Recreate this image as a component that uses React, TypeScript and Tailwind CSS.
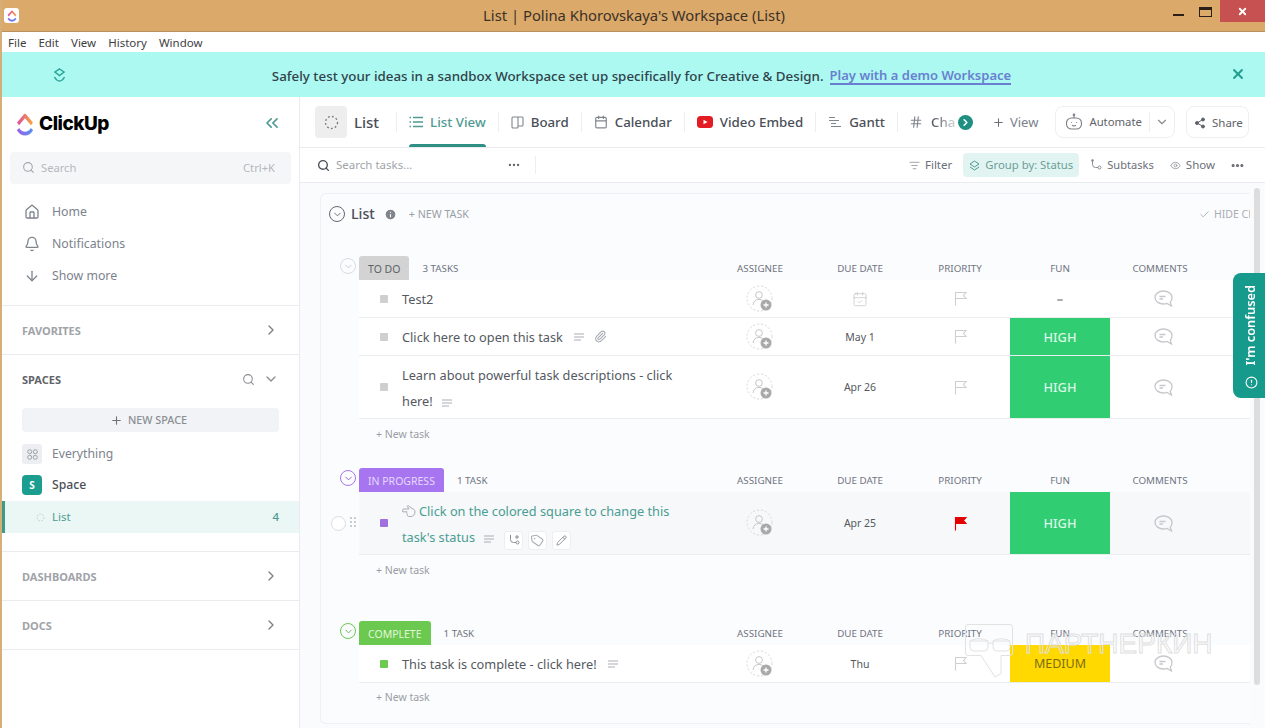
import type { ReactNode } from "react";
import {
  ArrowDown,
  Bell,
  CalendarCheck,
  Calendar,
  Check,
  ChevronDown,
  ChevronRight,
  ChevronsLeft,
  Hash,
  House,
  Info,
  ListFilter,
  Minus,
  Paperclip,
  Pencil,
  Plus,
  Search,
  Share2,
  Tag,
  X,
  AlertCircle,
  Ellipsis,
  Eye,
} from "lucide-react";

function Logo({ width, height, id }: { width: number; height: number; id: string }) {
  return (
    <svg width={width} height={height} viewBox="1 1 22 22" preserveAspectRatio="none" fill="none">
      <defs>
        <linearGradient id={`${id}-top`} x1="0" y1="0" x2="1" y2="0">
          <stop offset="0" stopColor="#e0509f" />
          <stop offset="1" stopColor="#f7a13e" />
        </linearGradient>
        <linearGradient id={`${id}-bottom`} x1="0" y1="0" x2="1" y2="0">
          <stop offset="0" stopColor="#9a62e6" />
          <stop offset="1" stopColor="#5a8fee" />
        </linearGradient>
      </defs>
      <path d="M3.5 11.5L12 3.500l8.500 8" stroke={`url(#${id}-top)`} strokeWidth="3.6" strokeLinejoin="round" />
      <path d="M3.5 16.500c2.200 2.800 5 4.300 8.500 4.300s6.300-1.500 8.500-4.300" stroke={`url(#${id}-bottom)`} strokeWidth="3.6" />
    </svg>
  );
}

function Lines({ className = "text-[#a9adb3]" }: { className?: string }) {
  return (
    <svg width="12" height="8" viewBox="0 0 12 8" className={`${className} inline-block`} fill="none" stroke="currentColor">
      <path d="M1 1h10M1 4h10M1 7h7" />
    </svg>
  );
}

function Assignee() {
  return (
    <svg width="28" height="28" viewBox="0 0 28 28" fill="none">
      <circle cx="13.5" cy="13.5" r="12.5" stroke="#d8d8d8" strokeDasharray="2 2" />
      <circle cx="13" cy="10" r="3.4" stroke="#c8c8c8" />
      <path d="M7 20c.4-3.600 2.800-5.600 6-5.600 1.500 0 2.700.4 3.700 1.200" stroke="#c8c8c8" />
      <circle cx="20" cy="20" r="5.500" fill="#a9a9a9" />
      <path d="M20 17.500v5M17.500 20h5" stroke="#fff" strokeWidth="1.300" />
    </svg>
  );
}

function Comment() {
  return (
    <svg width="19" height="17" viewBox="0 0 19 17" fill="none" stroke="#c6c8cb" strokeWidth="1.300" className="ml-[6px]">
      <path d="M9.500 1C4.800 1 1 3.800 1 7.500S4.800 14 9.500 14c1.300 0 2.400-.2 3.500-.6l4.500 2.600-1.200-3.700c1.100-1.200 1.700-2.800 1.700-4.800C18 3.800 14.200 1 9.500 1z" />
      <path d="M5.500 6.500h6M5.500 9h3.500" />
    </svg>
  );
}

function FlagIcon({ red = false }: { red?: boolean }) {
  return (
    <svg width="13" height="15" viewBox="0 0 13 15" fill={red ? "#e50000" : "none"} stroke={red ? "#e50000" : "#cfcfcf"} strokeWidth="1.100">
      <path d="M1.500 14.500V1.500h10.500l-2.500 3 2.500 3H1.500" />
    </svg>
  );
}

function HandLeft() {
  return (
    <svg width="14" height="13" viewBox="0 0 14 13" fill="none" stroke="#a9adb3" className="mr-[3px] inline-block -translate-y-[1px]">
      <path d="M1 4h6l-1.500-2.200c-.5-.8.4-1.500 1-.9L10 3.500c1.800.3 3 1.500 3 3.500 0 2.500-1.800 4.500-4 4.500H6.500c-.9 0-1.300-.9-.8-1.500-.8-.2-1-1.100-.5-1.600-.7-.3-.8-1.200-.2-1.600H1c-1.100 0-1.100-1.800 0-1.800z" />
    </svg>
  );
}

function Divider() {
  return <div className="h-[20px] w-px shrink-0 bg-[#eeeeee]" />;
}

function ViewTab({ icon, label, active = false }: { icon: ReactNode; label: string; active?: boolean }) {
  return (
    <div className="relative flex h-[50px] shrink-0 items-center px-[12px]">
      <div className={`flex items-center gap-[7px] text-[13.300px] font-medium ${active ? "text-[#4f9a92]" : "text-[#4a4f57]"}`}>
        {icon}
        <span className="pt-[2px]">{label}</span>
      </div>
      {active && <div className="absolute bottom-0 left-[12px] right-[12px] h-[3px] rounded-t bg-[#2f8f84]" />}
    </div>
  );
}

function SideSection({ label, dark = false, children }: { label: string; dark?: boolean; children?: ReactNode }) {
  return (
    <div className="flex h-[48px] items-center justify-between pl-[20px] pr-[20px]">
      <span className={`pt-[2px] text-[11px] font-bold ${dark ? "text-[#5f6369]" : "text-[#a0a3a8]"}`}>{label}</span>
      {children ?? <ChevronRight size={16} className="text-[#7c7f85]" />}
    </div>
  );
}

function NavItem({ icon, label }: { icon: ReactNode; label: string }) {
  return (
    <div className="flex h-[32px] items-center gap-[12px] pl-[21px] text-[12.300px] text-[#7c828d]">
      <span className="flex w-[17px] justify-center text-[#80858d]">{icon}</span>
      {label}
    </div>
  );
}

function Sidebar() {
  return (
    <aside className="flex w-[298px] shrink-0 flex-col border-r border-[#e9ebee] bg-white">
      <div className="flex h-[55px] items-start justify-between pl-[14px] pr-[17px] pt-[13px]">
        <div className="flex items-center gap-[5px]">
          <Logo width={18} height={23} id="side" />
          <span className="font-['Inter',sans-serif] text-[19px] font-extrabold tracking-[-0.5px] text-black">ClickUp</span>
        </div>
        <ChevronsLeft size={20} className="mt-[3px] text-[#4f9a92]" />
      </div>
      <div className="mx-[8px] flex h-[32px] items-center justify-between rounded-[4px] bg-[#f5f6f8] pl-[12px] pr-[16px] text-[11.200px] text-[#b4b8bd]">
        <span className="flex items-center gap-[6px]">
          <Search size={13} className="text-[#a3a7ac]" />
          Search
        </span>
        <span>Ctrl+K</span>
      </div>
      <div className="mt-[12px] border-b border-[#e9ebee] pb-[13px]">
        <NavItem icon={<House size={16} />} label="Home" />
        <NavItem icon={<Bell size={16} />} label="Notifications" />
        <NavItem icon={<ArrowDown size={16} />} label="Show more" />
      </div>
      <div className="border-b border-[#e9ebee]">
        <SideSection label="FAVORITES" />
      </div>
      <div className="border-b border-[#e9ebee] pb-[18px]">
        <SideSection label="SPACES" dark>
          <span className="flex items-center gap-[8px] text-[#8a8d92]">
            <Search size={13} />
            <ChevronDown size={16} />
          </span>
        </SideSection>
        <div className="mx-[20px] mt-[5px] flex h-[24px] items-center justify-center gap-[5px] rounded-[4px] bg-[#f1f3f6] pr-[4px] pt-[1px] text-[10.800px] font-medium text-[#8a8e94]">
          <Plus size={13} className="text-[#6f7378]" />
          NEW SPACE
        </div>
        <div className="mt-[12px] flex h-[20px] items-center gap-[10px] pl-[20px] text-[12.200px] text-[#7c828d]">
          <span className="flex h-[20px] w-[20px] items-center justify-center rounded-[3px] bg-[#eceef1]">
            <svg width="11" height="11" viewBox="0 0 11 11" fill="none" stroke="#9da1a7">
              <circle cx="2.700" cy="2.700" r="2" />
              <circle cx="8.300" cy="2.700" r="2" />
              <circle cx="2.700" cy="8.300" r="2" />
              <circle cx="8.300" cy="8.300" r="2" />
            </svg>
          </span>
          Everything
        </div>
        <div className="mt-[11px] flex h-[20px] items-center gap-[10px] pl-[20px] text-[12.200px] font-medium text-[#4a4f57]">
          <span className="flex h-[20px] w-[20px] items-center justify-center rounded-[4px] bg-[#1b9e8f] text-[10px] font-bold text-white">S</span>
          Space
        </div>
        <div className="mt-[6px] flex h-[32px] items-center justify-between border-l-[3px] border-[#3f9a86] bg-[#eaf7f5] pl-[31px] pr-[20px] text-[11.500px] text-[#4f9a92]">
          <span className="flex items-center gap-[7px]">
            <svg width="9" height="9" viewBox="0 0 9 9" fill="none" stroke="#c4c8c8" strokeDasharray="1.500 1.500">
              <circle cx="4.500" cy="4.500" r="3.500" />
            </svg>
            List
          </span>
          <span className="font-medium">4</span>
        </div>
      </div>
      <div className="border-b border-[#e9ebee]">
        <SideSection label="DASHBOARDS" />
      </div>
      <div className="border-b border-[#e9ebee]">
        <SideSection label="DOCS" />
      </div>
    </aside>
  );
}

function TopTabs() {
  return (
    <div className="flex h-[51px] items-center overflow-hidden border-b border-[#e9ebee] bg-white pl-[15px]">
      <div className="flex h-[32px] w-[32px] shrink-0 items-center justify-center rounded-[4px] bg-[#eeeeee]">
        <svg width="15" height="15" viewBox="0 0 15 15" fill="none" stroke="#77797c" strokeWidth="1.300" strokeDasharray="1.800 2.200">
          <circle cx="7.500" cy="7.500" r="6" />
        </svg>
      </div>
      <span className="ml-[7px] mr-[17px] pt-[1px] text-[15px] font-medium text-[#4a4f57]">List</span>
      <Divider />
      <ViewTab
        active
        label="List View"
        icon={
          <svg width="14" height="12" viewBox="0 0 14 12" fill="none" stroke="#4f9a92" strokeWidth="1.300">
            <path d="M4 1.500h10M4 6h10M4 10.500h10M.5 1.500h1.500M.5 6h1.500M.5 10.500h1.500" />
          </svg>
        }
      />
      <Divider />
      <ViewTab
        label="Board"
        icon={
          <svg width="13" height="13" viewBox="0 0 13 13" fill="none" stroke="#80858d" strokeWidth="1.100">
            <path d="M1 2a1 1 0 011-1h9a1 1 0 011 1v7a1 1 0 01-1 1H7M1 2v9a1 1 0 001 1h4a1 1 0 001-1V1" />
          </svg>
        }
      />
      <Divider />
      <ViewTab label="Calendar" icon={<Calendar size={14} className="text-[#80858d]" />} />
      <Divider />
      <ViewTab
        label="Video Embed"
        icon={
          <svg width="16" height="12" viewBox="0 0 16 12">
            <rect width="16" height="12" rx="3.500" fill="#e31b23" />
            <path d="M6.500 3.800L10.500 6l-4 2.200z" fill="#fff" />
          </svg>
        }
      />
      <Divider />
      <ViewTab
        label="Gantt"
        icon={
          <svg width="14" height="12" viewBox="0 0 14 12" fill="none" stroke="#80858d">
            <path d="M1 1.500h6M1 4.500h10M3 7.500h5M3 10.500h10" />
          </svg>
        }
      />
      <Divider />
      <div className="relative flex w-[60px] shrink-0 items-center gap-[8px] pl-[11px] text-[13.300px] font-medium text-[#4a4f57]">
        <Hash size={14} className="shrink-0 text-[#80858d]" />
        <span className="bg-gradient-to-r from-[#4a4f57] to-[#d5d7da] bg-clip-text pt-[2px] text-transparent">Cha</span>
        <span className="absolute left-[60px] flex h-[15px] w-[15px] items-center justify-center rounded-full bg-[#1f8f82]">
          <ChevronRight size={11} strokeWidth={3.500} className="text-white" />
        </span>
      </div>
      <div className="ml-[34px] flex shrink-0 items-center gap-[5px] pt-[1px] text-[13px] text-[#7c828d]">
        <Plus size={13} className="text-[#6b6f75]" />
        View
      </div>
      <div className="ml-[17px] flex h-[32px] w-[120px] shrink-0 items-center rounded-[8px] border border-[#eeeff1] pl-[9px] text-[11.300px] text-[#5f6369]">
        <svg width="18" height="18" viewBox="0 0 18 18" fill="none" stroke="#7b7e84" strokeWidth="1.100">
          <rect x="1.500" y="5" width="15" height="11" rx="5" />
          <path d="M9 5V2.500" />
          <circle cx="9" cy="1.800" r=".8" />
          <path d="M6.500 9v.8M11.500 9v.8M7 12.300c1.200.7 2.800.7 4 0" />
        </svg>
        <span className="ml-[6px]">Automate</span>
        <div className="ml-[7px] h-[20px] w-px bg-[#eeeeee]" />
        <ChevronDown size={14} className="ml-[5px] text-[#8a8d92]" />
      </div>
      <div className="ml-[11px] flex h-[32px] w-[63px] shrink-0 items-center justify-center gap-[6px] rounded-[8px] border border-[#eeeff1] pl-[1px] pt-[1px] text-[11.500px] text-[#5f6369]">
        <Share2 size={12} fill="#5f6369" />
        Share
      </div>
    </div>
  );
}

function Toolbar() {
  return (
    <div className="flex h-[35px] items-center border-b border-[#e9ebee] bg-white pl-[17px] pr-[20px] text-[11.500px] text-[#6b7078]">
      <Search size={13} strokeWidth={2.500} className="text-[#4a4f57]" />
      <span className="ml-[6px] w-[171px] text-[#a0a4aa]">Search tasks...</span>
      <Ellipsis size={14} className="text-[#5f6369]" />
      <div className="ml-[14px] h-[18px] w-px bg-[#eeeeee]" />
      <div className="ml-auto flex items-center">
        <span className="flex items-center gap-[5px]">
          <ListFilter size={11} className="text-[#9a9ea3]" />
          Filter
        </span>
        <span className="ml-[11px] flex h-[24px] w-[116px] items-center justify-center gap-[5px] rounded-[4px] bg-[#e2f4f2] text-[11.300px] text-[#6a9f98]">
          <svg width="11" height="11" viewBox="0 0 11 11" fill="none" stroke="#4f9a92">
            <path d="M5.500 1L10 4 5.500 7 1 4zM1 7l4.500 3L10 7" />
          </svg>
          Group by: Status
        </span>
        <span className="ml-[11px] flex items-center gap-[5px] text-[11.100px]">
          <svg width="12" height="12" viewBox="0 0 12 12" fill="none" stroke="#8a8d92">
            <path d="M2.500 1v4.500a3 3 0 003 3H8" />
            <circle cx="2.500" cy="1.500" r="1" />
            <circle cx="9.500" cy="8.500" r="1.500" />
          </svg>
          Subtasks
        </span>
        <span className="ml-[16px] flex items-center gap-[5px]">
          <Eye size={11} className="text-[#9a9ea3]" />
          Show
        </span>
        <Ellipsis size={15} strokeWidth={3} className="ml-[15px] text-[#5f6369]" />
      </div>
    </div>
  );
}

const columns = ["ASSIGNEE", "DUE DATE", "PRIORITY", "FUN", "COMMENTS"];

function GroupHeader({ tag, tagClass, circle, count }: { tag: string; tagClass: string; circle: string; count: string }) {
  return (
    <div className="flex h-[24px] items-start">
      <div className="flex w-[38px] shrink-0 justify-end pr-[3px] pt-[2px]">
        <span className={`flex h-[16px] w-[16px] items-center justify-center rounded-full border ${circle}`}>
          <ChevronDown size={11} />
        </span>
      </div>
      <span className={`flex h-[24px] items-center rounded-t-[3px] px-[9px] pt-[3px] text-[10.500px] ${tagClass}`}>{tag}</span>
      <span className="ml-[13px] flex h-[24px] flex-1 items-center pt-[2px] text-[9.800px] text-[#6f7480]">{count}</span>
      {columns.map((c) => (
        <span key={c} className="flex h-[24px] w-[100px] shrink-0 items-center justify-center pt-[2px] text-[9.800px] text-[#6f7480]">
          {c}
        </span>
      ))}
      <span className="w-[40px] shrink-0" />
    </div>
  );
}

type RowProps = {
  title: ReactNode;
  square: string;
  date?: string;
  fun?: "HIGH" | "MEDIUM";
  tall?: boolean;
  hover?: boolean;
  red?: boolean;
};

function Row({ title, square, date, fun, tall = false, hover = false, red = false }: RowProps) {
  return (
    <div className={`flex ${tall ? "h-[63px]" : "h-[38px]"}`}>
      <div className="flex w-[38px] shrink-0 items-center justify-end gap-[4px] pr-[1px]">
        {hover && (
          <>
            <span className="h-[15px] w-[15px] rounded-full border border-[#dddddd] bg-white" />
            <svg width="8" height="13" viewBox="0 0 8 13" fill="#c9cbce">
              <rect x="0" y="0" width="2" height="2" />
              <rect x="4" y="0" width="2" height="2" />
              <rect x="0" y="4" width="2" height="2" />
              <rect x="4" y="4" width="2" height="2" />
              <rect x="0" y="8" width="2" height="2" />
              <rect x="4" y="8" width="2" height="2" />
            </svg>
          </>
        )}
      </div>
      <div className={`flex min-w-0 flex-1 border-b border-[#ecedef] ${hover ? "bg-[#f6f8f9]" : "bg-white"}`}>
        <div className="flex min-w-0 flex-1 items-center pl-[21px]">
          <span className={`h-[8px] w-[8px] shrink-0 rounded-[1px] ${square}`} />
          <div className={`ml-[14px] w-[285px] text-[12.750px] leading-[26px] text-[#55595f] ${tall ? "pt-[2px]" : ""}`}>{title}</div>
        </div>
        <div className="flex w-[100px] shrink-0 items-center justify-center">
          <Assignee />
        </div>
        <div className={`flex w-[100px] shrink-0 items-center justify-center text-[10.500px] text-[#55595f] ${date ? "pt-[2px]" : ""}`}>
          {date ?? <CalendarCheck size={16} strokeWidth={1} className="text-[#bdbfc2]" />}
        </div>
        <div className="flex w-[100px] shrink-0 items-center justify-center">
          <FlagIcon red={red} />
        </div>
        <div
          className={`flex w-[100px] shrink-0 items-center justify-center pt-[2px] ${
            fun === "HIGH"
              ? "bg-[#31cd72] text-[12.800px] font-medium text-[#dbf7e6]"
              : fun === "MEDIUM"
                ? "bg-[#ffd900] text-[12.500px] text-[#7d6d10]"
                : "text-black"
          }`}
        >
          {fun ?? <Minus size={8} />}
        </div>
        <div className="flex w-[100px] shrink-0 items-center justify-center">
          <Comment />
        </div>
        <div className="w-[40px] shrink-0" />
      </div>
    </div>
  );
}

function NewTask({ className = "h-[30px]" }: { className?: string }) {
  return <div className={`flex items-center pl-[55px] pt-[2px] text-[10.500px] text-[#9a9ea5] ${className}`}>+ New task</div>;
}

function TaskList() {
  return (
    <div className="min-h-0 flex-1 overflow-hidden bg-[#f9fbfd] pl-[20px] pt-[10px]">
      <div className="w-[930px] overflow-hidden rounded-l-[6px] border-y border-l border-[#eef0f3] bg-[#fbfcfe] pb-[12px] pt-[9px]">
        <div className="flex h-[22px] items-center pl-[8px]">
          <span className="flex h-[16px] w-[16px] items-center justify-center rounded-full border border-[#63676d] text-[#63676d]">
            <ChevronDown size={11} />
          </span>
          <span className="ml-[6px] text-[14.200px] font-medium text-[#4a4f57]">List</span>
          <Info size={13} fill="#80858d" className="ml-[9px] text-white" />
          <span className="ml-[12px] pt-[1px] text-[10.700px] text-[#9a9ea5]">+ NEW TASK</span>
          <span className="ml-auto flex items-center gap-[4px] pt-[1px] text-[10.500px] text-[#a9adb3]">
            <Check size={11} />
            <span className="w-[36px] overflow-hidden whitespace-nowrap">HIDE CLOSED</span>
          </span>
        </div>
        <div className="mt-[31px]">
          <GroupHeader tag="TO DO" tagClass="bg-[#d3d3d3] text-[#5f6369]" circle="border-[#d9dbde] text-[#c9cbce]" count="3 TASKS" />
          <Row title="Test2" square="bg-[#cfcfcf]" />
          <Row
            title={
              <span className="flex items-center gap-[10px]">
                Click here to open this task
                <Lines />
                <Paperclip size={13} className="-ml-[1px] text-[#a9adb3]" />
              </span>
            }
            square="bg-[#cfcfcf]"
            date="May 1"
            fun="HIGH"
          />
          <Row
            title={
              <>
                Learn about powerful task descriptions - click here!{" "}
                <Lines className="ml-[5px] text-[#a9adb3]" />
              </>
            }
            square="bg-[#cfcfcf]"
            date="Apr 26"
            fun="HIGH"
            tall
          />
          <NewTask />
        </div>
        <div className="mt-[19px]">
          <GroupHeader tag="IN PROGRESS" tagClass="bg-[#a875f0] text-[#e6d8ff]" circle="border-[#a875f0] text-[#8b5fc8]" count="1 TASK" />
          <Row
            title={
              <span className="text-[#4a9d93]">
                <HandLeft />
                Click on the colored square to change this task's status
                <Lines className="ml-[8px] text-[#a9adb3]" />
                <span className="ml-[9px] inline-flex translate-y-[4px] gap-[5px]">
                  <span className="flex h-[19px] w-[19px] items-center justify-center rounded-[3px] border border-[#eeeeee] bg-white">
                    <svg width="12" height="12" viewBox="0 0 12 12" fill="none" stroke="#8a8d92">
                      <path d="M2.500 1v4.500a3 3 0 003 3H8M9 1v4M7 3h4" />
                      <circle cx="9.500" cy="8.500" r="1.500" />
                    </svg>
                  </span>
                  <span className="flex h-[19px] w-[19px] items-center justify-center rounded-[3px] border border-[#eeeeee] bg-white">
                    <Tag size={13} className="rotate-[-10deg] text-[#a9adb3]" />
                  </span>
                  <span className="flex h-[19px] w-[19px] items-center justify-center rounded-[3px] border border-[#eeeeee] bg-white">
                    <Pencil size={11} className="text-[#8a8d92]" />
                  </span>
                </span>
              </span>
            }
            square="bg-[#a070e0]"
            date="Apr 25"
            fun="HIGH"
            tall
            hover
            red
          />
          <NewTask />
        </div>
        <div className="mt-[36px]">
          <GroupHeader tag="COMPLETE" tagClass="bg-[#6bc950] text-[#e2f7da]" circle="border-[#6bc950] text-[#6fa860]" count="1 TASK" />
          <Row
            title={
              <span className="flex items-center gap-[10px]">
                This task is complete - click here!
                <Lines />
              </span>
            }
            square="bg-[#6bc950]"
            date="Thu"
            fun="MEDIUM"
          />
          <NewTask className="h-[28px]" />
        </div>
      </div>
    </div>
  );
}

export default function App() {
  return (
    <div className="relative flex h-[728px] w-full flex-col overflow-hidden border-l-2 border-[#d6ae78] bg-white font-['Noto_Sans',sans-serif]">
      <div className="-ml-[2px] flex h-[32px] shrink-0 items-start border-b border-[#b9935f] bg-[#dba96a]">
        <div className="ml-[4px] mt-[8px] flex h-[15px] w-[15px] items-center justify-center rounded-[3px] bg-white">
          <Logo width={10} height={12} id="title" />
        </div>
        <div className="flex h-[31px] flex-1 items-center justify-center pl-[76px] text-[14.800px] text-[#3b3126]">List | Polina Khorovskaya's Workspace (List)</div>
        <div className="flex h-[22px] w-[92px] items-start">
          <div className="mt-[14px] h-[2px] w-[11px] bg-[#2a2015]" />
          <div className="ml-[15px] mt-[7px] h-[10px] w-[13px] border border-t-[3px] border-[#2a2015]" />
          <div className="ml-[8px] flex h-[22px] w-[45px] items-center justify-center bg-[#c75050]">
            <X size={11} strokeWidth={4} className="text-white" />
          </div>
        </div>
      </div>
      <div className="flex h-[20px] shrink-0 items-center gap-[12px] pl-[6px] pt-[1px] text-[11.500px] text-[#3e3e3e]">
        <span>File</span>
        <span>Edit</span>
        <span>View</span>
        <span>History</span>
        <span>Window</span>
      </div>
      <div className="relative flex h-[45px] shrink-0 items-center justify-center bg-[#abf9f1] pl-[16px] pt-[3px] text-[13.350px] font-medium text-[#31424a]">
        <svg width="13" height="15" viewBox="0 0 13 15" fill="none" stroke="#27a596" strokeWidth="1.500" className="absolute left-[51px] top-[16px]">
          <path d="M6.500 1L11 4 6.500 7.500 2 4z" />
          <path d="M1.500 9c1.400 2.600 3 4 5 4s3.600-1.400 5-4" />
        </svg>
        <span>Safely test your ideas in a sandbox Workspace set up specifically for Creative &amp; Design.</span>
        <span className="ml-[6px] border-b-2 border-[#6a7fd0] text-[13px] font-semibold leading-[15px] text-[#6a7fd0]">Play with a demo Workspace</span>
        <X size={16} strokeWidth={2.800} className="absolute right-[19px] top-[14px] text-[#1f9d8f]" />
      </div>
      <div className="flex min-h-0 flex-1">
        <Sidebar />
        <main className="flex min-w-0 flex-1 flex-col">
          <TopTabs />
          <Toolbar />
          <TaskList />
        </main>
      </div>

      {/* scrollbar, feedback tab and watermark sit over the page */}
      <div className="absolute right-[5px] top-[188px] h-[497px] w-[6px] rounded-full bg-[#dddddd]" />
      <div className="absolute right-0 top-[273px] flex h-[125px] w-[32px] flex-col items-center justify-between rounded-l-[8px] bg-[#169a8c] pb-[9px] pl-[4px] pt-[12px] text-white">
        <span className="rotate-180 whitespace-nowrap text-[12.800px] font-semibold [writing-mode:vertical-rl]">I'm confused</span>
        <AlertCircle size={13} />
      </div>
      <div className="pointer-events-none absolute left-[963px] top-[624px] flex items-start">
        <svg width="48" height="54" viewBox="0 0 48 54" fill="none" stroke="#e2e2e2">
          <path d="M3 .5h42A2.500 2.500 0 0147.500 3v26a2.500 2.500 0 01-2.500 2.500h-9v18L30 53 16 31.500H3A2.500 2.500 0 01.5 29V3A2.500 2.500 0 013 .5z" />
          <path d="M5 17h18v6a4 4 0 01-4 4H9a4 4 0 01-4-4zM28 17h17v6a4 4 0 01-4 4h-9a4 4 0 01-4-4zM23 19h5M5 17c5-3 12-3 18 0M28 17c5-3 12-3 17 0" />
        </svg>
        <span className="ml-[12px] mt-[5px] font-['Liberation_Sans',sans-serif] text-[28px] leading-[30px] text-transparent [-webkit-text-stroke:1px_#dfdfdf]">ПАРТНЕРКИН</span>
      </div>
    </div>
  );
}
